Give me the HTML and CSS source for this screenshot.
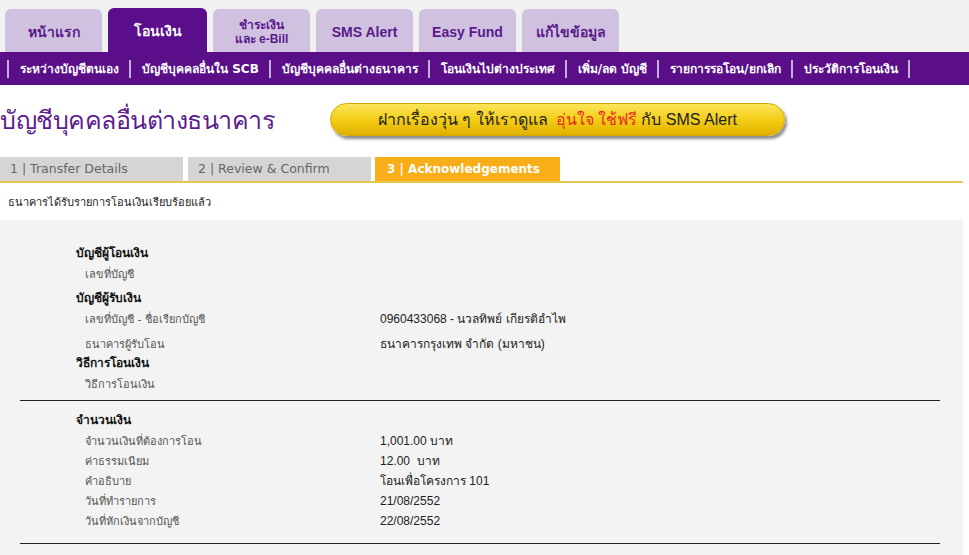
FILE: index.html
```html
<!DOCTYPE html>
<html lang="th">
<head>
  <meta charset="UTF-8" />
  <title>โอนเงิน - บัญชีบุคคลอื่นต่างธนาคาร</title>
  <link rel="stylesheet" href="styles.css">
</head>
<body>

<div class="topnav">
  <div class="tab">หน้าแรก</div>
  <div class="tab active">โอนเงิน</div>
  <div class="tab small">ชำระเงิน<br>และ e-Bill</div>
  <div class="tab">SMS Alert</div>
  <div class="tab">Easy Fund</div>
  <div class="tab">แก้ไขข้อมูล</div>
</div>

<div class="subnav">
  <span class="sub">ระหว่างบัญชีตนเอง</span>
  <span class="sub">บัญชีบุคคลอื่นใน SCB</span>
  <span class="sub">บัญชีบุคคลอื่นต่างธนาคาร</span>
  <span class="sub">โอนเงินไปต่างประเทศ</span>
  <span class="sub">เพิ่ม/ลด บัญชี</span>
  <span class="sub">รายการรอโอน/ยกเลิก</span>
  <span class="sub last">ประวัติการโอนเงิน</span>
</div>

<div class="heading">
  <h1 class="title">บัญชีบุคคลอื่นต่างธนาคาร</h1>
  <div class="banner">ฝากเรื่องวุ่น ๆ ให้เราดูแล <span class="red">อุ่นใจ ใช้ฟรี</span> กับ SMS Alert</div>
</div>

<div class="steps">
  <div class="step">1 | Transfer Details</div>
  <div class="step">2 | Review &amp; Confirm</div>
  <div class="step current">3 | Acknowledgements</div>
</div>

<p class="message">ธนาคารได้รับรายการโอนเงินเรียบร้อยแล้ว</p>

<div class="details">
  <div class="group">
    <div class="group-title">บัญชีผู้โอนเงิน</div>
    <div class="row"><span class="label">เลขที่บัญชี</span><span class="value"></span></div>
  </div>

  <div class="group g2">
    <div class="group-title">บัญชีผู้รับเงิน</div>
    <div class="row"><span class="label">เลขที่บัญชี - ชื่อเรียกบัญชี</span><span class="value">0960433068 - นวลทิพย์ เกียรติอำไพ</span></div>
    <div class="row"><span class="label">ธนาคารผู้รับโอน</span><span class="value">ธนาคารกรุงเทพ จำกัด (มหาชน)</span></div>
  </div>

  <div class="group">
    <div class="group-title">วิธีการโอนเงิน</div>
    <div class="row"><span class="label">วิธีการโอนเงิน</span><span class="value"></span></div>
  </div>

  <hr class="rule">

  <div class="group amount">
    <div class="group-title">จำนวนเงิน</div>
    <div class="row"><span class="label">จำนวนเงินที่ต้องการโอน</span><span class="value">1,001.00 บาท</span></div>
    <div class="row"><span class="label">ค่าธรรมเนียม</span><span class="value">12.00&nbsp; บาท</span></div>
    <div class="row"><span class="label">คำอธิบาย</span><span class="value">โอนเพื่อโครงการ 101</span></div>
    <div class="row"><span class="label">วันที่ทำรายการ</span><span class="value">21/08/2552</span></div>
    <div class="row"><span class="label">วันที่หักเงินจากบัญชี</span><span class="value">22/08/2552</span></div>
  </div>

  <hr class="rule last">
</div>

</body>
</html>
```

FILE: styles.css
```css
* {
  box-sizing: border-box;
}
body {
  margin: 0;
  background: #fff;
  font-family: Tahoma, "DejaVu Sans", sans-serif;
  color: #222;
}

/* top tabs */
.topnav {
  display: flex;
  align-items: flex-end;
  gap: 6px;
  height: 52px;
  padding-left: 5px;
  background: #f1f1f1;
}
.tab {
  width: 97px;
  height: 43px;
  display: flex;
  align-items: center;
  justify-content: center;
  text-align: center;
  background: #d0c1e0;
  color: #5a1a8a;
  font-family: "Liberation Sans", Tahoma, sans-serif;
  font-weight: bold;
  font-size: 14px;
  border-radius: 6px 6px 0 0;
  padding-top: 2px;
}
.tab.small {
  font-size: 12px;
  line-height: 14px;
}
.tab.active {
  height: 44px;
  width: 99px;
  background: #5b0e8b;
  color: #fff;
}

/* sub menu */
.subnav {
  display: flex;
  align-items: center;
  height: 33px;
  background: #5a0e88;
  padding-left: 7px;
}
.sub {
  color: #fff;
  font-size: 12px;
  font-weight: bold;
  padding: 0 10px 0 11px;
  line-height: 18px;
  border-left: 2px solid #c6b0dd;
}
.sub.last {
  border-right: 2px solid #c6b0dd;
}

/* heading */
.heading {
  display: flex;
  align-items: center;
  height: 72px;
}
.title {
  margin: 0;
  width: 330px;
  font-size: 25px;
  font-weight: normal;
  color: #5c1d8c;
  font-family: "Liberation Sans", Tahoma, sans-serif;
  letter-spacing: -0.5px;
  margin-top: -2px;
}
.banner {
  width: 455px;
  height: 33px;
  margin-top: -4px;
  border-radius: 17px;
  background: linear-gradient(to bottom, #fbe55a, #f2cb12 55%, #e0b000);
  box-shadow: 2px 3px 3px rgba(0, 0, 0, 0.45);
  border: 1px solid #d2a800;
  display: flex;
  align-items: center;
  justify-content: center;
  font-family: "Liberation Sans", Tahoma, sans-serif;
  font-size: 16px;
  color: #222;
}
.banner .red {
  color: #e42a1c;
  margin: 0 4px 0 8px;
}

/* steps */
.steps {
  display: flex;
  gap: 5px;
  width: 963px;
  height: 26px;
  border-bottom: 2px solid #e6c653;
}
.step {
  width: 183px;
  height: 24px;
  line-height: 24px;
  padding-left: 10px;
  background: #d5d5d5;
  color: #666;
  font-family: "DejaVu Sans", Verdana, sans-serif;
  font-size: 12.5px;
}
.step.current {
  width: 185px;
  margin-left: -1px;
  background: #f8ae18;
  color: #fff;
  font-weight: bold;
  font-size: 12px;
  padding-left: 12px;
}

.message {
  margin: 0;
  height: 37px;
  line-height: 40px;
  padding-left: 8px;
  font-size: 11px;
}

/* detail box */
.details {
  width: 963px;
  min-height: 335px;
  background: #f3f3f3;
  padding-top: 23px;
  font-size: 11px;
}
.group {
  display: flex;
  flex-direction: column;
}
.g2 {
  margin-top: 5px;
}
.g2 .row + .row {
  margin-top: 5px;
}
.group-title {
  height: 20px;
  line-height: 20px;
  padding-left: 76px;
  font-weight: bold;
  font-size: 12px;
  color: #111;
}
.row {
  display: flex;
  align-items: center;
  height: 20px;
  padding-left: 85px;
}
.label {
  width: 295px;
  line-height: 20px;
  padding-top: 3px;
  color: #555;
}
.value {
  line-height: 20px;
  padding-top: 1px;
  font-family: "Liberation Sans", Arial, Tahoma, sans-serif;
  font-size: 12px;
  color: #222;
}
.rule {
  margin: 7px 0 9px 20px;
  width: 920px;
  border: 0;
  border-top: 1px solid #222;
}
.rule.last {
  margin-top: 13px;
}
```
